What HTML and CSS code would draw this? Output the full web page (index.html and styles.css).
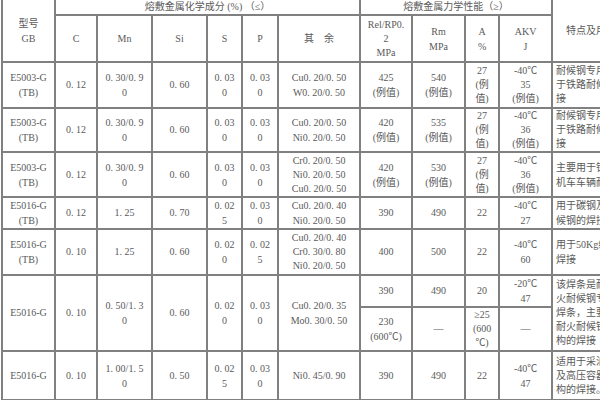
FILE: index.html
```html
<!DOCTYPE html>
<html lang="zh-CN">
<head>
<meta charset="utf-8">
<title>耐候钢焊条</title>
<link rel="stylesheet" href="styles.css">
</head>
<body>
<table class="grid">
  <colgroup>
    <col class="c-type"><col class="c-c"><col class="c-mn"><col class="c-si"><col class="c-s"><col class="c-p"><col class="c-other"><col class="c-rel"><col class="c-rm"><col class="c-a"><col class="c-akv"><col class="c-note">
  </colgroup>
  <tr class="r-h1">
    <td rowspan="2" class="loose">型号<br>GB</td>
    <td colspan="6">熔敷金属化学成分 (%) （≤）</td>
    <td colspan="4">熔敷金属力学性能（≥）</td>
    <td rowspan="2" class="note-head">特点及用途</td>
  </tr>
  <tr class="r-h2">
    <td>C</td><td>Mn</td><td>Si</td><td>S</td><td>P</td><td>其　余</td>
    <td>Rel/RP0.<br>2<br>MPa</td><td class="loose">Rm<br>MPa</td><td class="loose">A<br>%</td><td class="loose">AKV<br>J</td>
  </tr>
  <tr class="r-1">
    <td class="loose">E5003-G<br>(TB)</td><td>0. 12</td><td class="loose">0. 30/0. 9<br>0</td><td>0. 60</td><td class="loose">0. 03<br>0</td><td class="loose">0. 03<br>0</td>
    <td class="loose">Cu0. 20/0. 50<br>W0. 20/0. 50</td><td class="loose">425<br>(例值)</td><td class="loose">540<br>(例值)</td><td>27<br>(例<br>值)</td><td>-40℃<br>35<br>(例值)</td>
    <td class="note">耐候钢专用焊条，用<br>于铁路耐候钢的焊<br>接</td>
  </tr>
  <tr class="r-2">
    <td class="loose">E5003-G<br>(TB)</td><td>0. 12</td><td class="loose">0. 30/0. 9<br>0</td><td>0. 60</td><td class="loose">0. 03<br>0</td><td class="loose">0. 03<br>0</td>
    <td class="loose">Cu0. 20/0. 50<br>Ni0. 20/0. 50</td><td class="loose">420<br>(例值)</td><td class="loose">535<br>(例值)</td><td>27<br>(例<br>值)</td><td>-40℃<br>36<br>(例值)</td>
    <td class="note">耐候钢专用焊条，用<br>于铁路耐候钢的焊<br>接</td>
  </tr>
  <tr class="r-3">
    <td class="loose">E5003-G<br>(TB)</td><td>0. 12</td><td class="loose">0. 30/0. 9<br>0</td><td>0. 60</td><td class="loose">0. 03<br>0</td><td class="loose">0. 03<br>0</td>
    <td>Cr0. 20/0. 50<br>Ni0. 20/0. 50<br>Cu0. 20/0. 50</td><td class="loose">420<br>(例值)</td><td class="loose">530<br>(例值)</td><td>27<br>(例<br>值)</td><td>-40℃<br>36<br>(例值)</td>
    <td class="note loose">主要用于铁路车辆、<br>机车车辆耐候钢的</td>
  </tr>
  <tr class="r-4">
    <td class="loose">E5016-G<br>(TB)</td><td>0. 12</td><td>1. 25</td><td>0. 70</td><td class="loose">0. 02<br>5</td><td class="loose">0. 03<br>0</td>
    <td class="loose">Cu0. 20/0. 40<br>Ni0. 20/0. 50</td><td>390</td><td>490</td><td>22</td><td class="loose">-40℃<br>27</td>
    <td class="note loose">用于碳钢及耐<br>候钢的焊接</td>
  </tr>
  <tr class="r-5">
    <td class="loose">E5016-G<br>(TB)</td><td>0. 10</td><td>1. 25</td><td>0. 60</td><td class="loose">0. 02<br>0</td><td class="loose">0. 02<br>5</td>
    <td>Cu0. 20/0. 40<br>Cr0. 30/0. 80<br>Ni0. 20/0. 50</td><td>400</td><td>500</td><td>22</td><td class="loose">-40℃<br>60</td>
    <td class="note loose">用于50Kg级钢轨的<br>焊接</td>
  </tr>
  <tr class="r-6a">
    <td rowspan="2">E5016-G</td><td rowspan="2">0. 10</td><td rowspan="2" class="loose">0. 50/1. 3<br>0</td><td rowspan="2">0. 60</td><td rowspan="2" class="loose">0. 02<br>0</td><td rowspan="2" class="loose">0. 03<br>0</td>
    <td rowspan="2" class="loose">Cu0. 20/0. 35<br>Mo0. 30/0. 50</td><td>390</td><td>490</td><td>20</td><td class="loose">-20℃<br>47</td>
    <td rowspan="2" class="note">该焊条是耐火耐候<br>火耐候钢专用的<br>焊条，主要用于<br>耐火耐候钢结<br>构的焊接</td>
  </tr>
  <tr class="r-6b">
    <td class="loose">230<br>(600℃)</td><td>—</td><td>≥25<br>(600<br>℃)</td><td>—</td>
  </tr>
  <tr class="r-7">
    <td>E5016-G</td><td>0. 10</td><td class="loose">1. 00/1. 5<br>0</td><td>0. 50</td><td class="loose">0. 02<br>5</td><td class="loose">0. 03<br>0</td>
    <td>Ni0. 45/0. 90</td><td>390</td><td>490</td><td>22</td><td class="loose">-40℃<br>47</td>
    <td class="note">适用于采油平台<br>及高压容器等结<br>构的焊接。</td>
  </tr>
</table>
</body>
</html>
```

FILE: styles.css
```css
html, body {
  margin: 0;
  padding: 0;
  background: #ffffff;
}
body {
  width: 600px;
  height: 400px;
  overflow: hidden;
}
.grid {
  border-collapse: collapse;
  table-layout: fixed;
  width: 630px;
  margin: -2px 0 0 1px;
}
.grid td {
  border: 2px solid #808080;
  padding: 0 2px;
  text-align: center;
  vertical-align: middle;
  font-family: "Liberation Serif", "Noto Sans CJK SC", serif;
  font-size: 10px;
  line-height: 14px;
  color: #5a5a5a;
  white-space: nowrap;
  overflow: hidden;
}
.grid td.loose {
  line-height: 15px;
}
.grid td.note {
  text-align: left;
  padding-left: 3px;
}
.grid td.note-head {
  text-align: left;
  padding-left: 13px;
}
.c-type { width: 53px; }
.c-c { width: 42px; }
.c-mn { width: 55px; }
.c-si { width: 55px; }
.c-s { width: 35px; }
.c-p { width: 36px; }
.c-other { width: 82px; }
.c-rel { width: 52px; }
.c-rm { width: 53px; }
.c-a { width: 34px; }
.c-akv { width: 53px; }
.c-note { width: 80px; }
.r-h1 { height: 16px; }
.r-h2 { height: 47px; }
.r-1 { height: 46px; }
.r-2 { height: 44px; }
.r-3 { height: 45px; }
.r-4 { height: 30px; }
.r-5 { height: 46px; }
.r-6a { height: 30px; }
.r-6b { height: 44px; }
.r-7 { height: 49px; }
```
